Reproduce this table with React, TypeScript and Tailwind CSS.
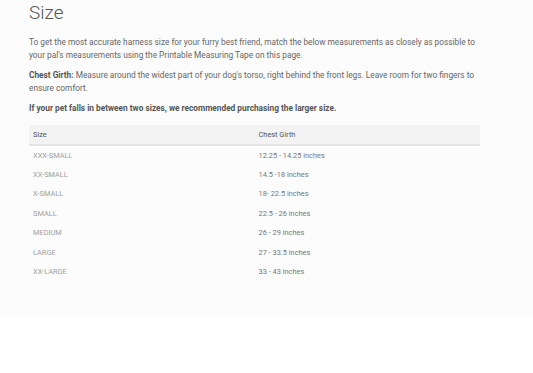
import React from 'react';

const sizes = [
  { size: 'XXX-SMALL', girth: '12.25 - 14.25 inches' },
  { size: 'XX-SMALL', girth: '14.5 -18 inches' },
  { size: 'X-SMALL', girth: '18- 22.5 inches' },
  { size: 'SMALL', girth: '22.5 - 26 inches' },
  { size: 'MEDIUM', girth: '26 - 29 inches' },
  { size: 'LARGE', girth: '27 - 33.5 inches' },
  { size: 'XX-LARGE', girth: '33 - 43 inches' },
];

const App: React.FC = () => {
  return (
    <div className="min-h-[373px] bg-white" style={{ fontFamily: 'Roboto, "Open Sans", sans-serif' }}>
      <section className="h-[315px] bg-[#fcfcfc] pl-[29px] pr-[40px] pt-[1px]">
        <h2 className="text-[19px] leading-[24px] font-light text-[#555]">Size</h2>

        <p className="mt-[11px] text-[8.3px] leading-[13px] text-[#666]">
          To get the most accurate harness size for your furry best friend, match the below measurements as closely as possible to
          your pal's measurements using the Printable Measuring Tape on this page.
        </p>
        <p className="mt-[7px] text-[8.3px] leading-[13px] text-[#666]">
          <span className="font-bold text-[#555]">Chest Girth:</span>
          {' '}Measure around the widest part of your dog's torso, right behind the front legs. Leave room for two fingers to
          ensure comfort.
        </p>
        <p className="mt-[7px] text-[8.3px] leading-[13px] font-bold text-[#555]">
          If your pet falls in between two sizes, we recommended purchasing the larger size.
        </p>

        {/* Size chart */}
        <table className="mt-[10px] w-[451px] border-collapse text-[7.4px] text-left">
          <thead>
            <tr className="bg-[#f3f3f3] border-b-2 border-[#e4e4e4]">
              <th className="w-1/2 h-[20px] px-[4px] font-normal text-[#555]">Size</th>
              <th className="w-1/2 h-[20px] px-[4px] font-normal text-[#555]">Chest Girth</th>
            </tr>
          </thead>
          <tbody>
            {sizes.map((row) => (
              <tr key={row.size}>
                <td className="h-[19.5px] px-[4px] text-[#a0a0a0]">{row.size}</td>
                <td className="h-[19.5px] px-[4px] text-[#777]">{row.girth}</td>
              </tr>
            ))}
          </tbody>
        </table>
      </section>
    </div>
  );
};

export default App;
